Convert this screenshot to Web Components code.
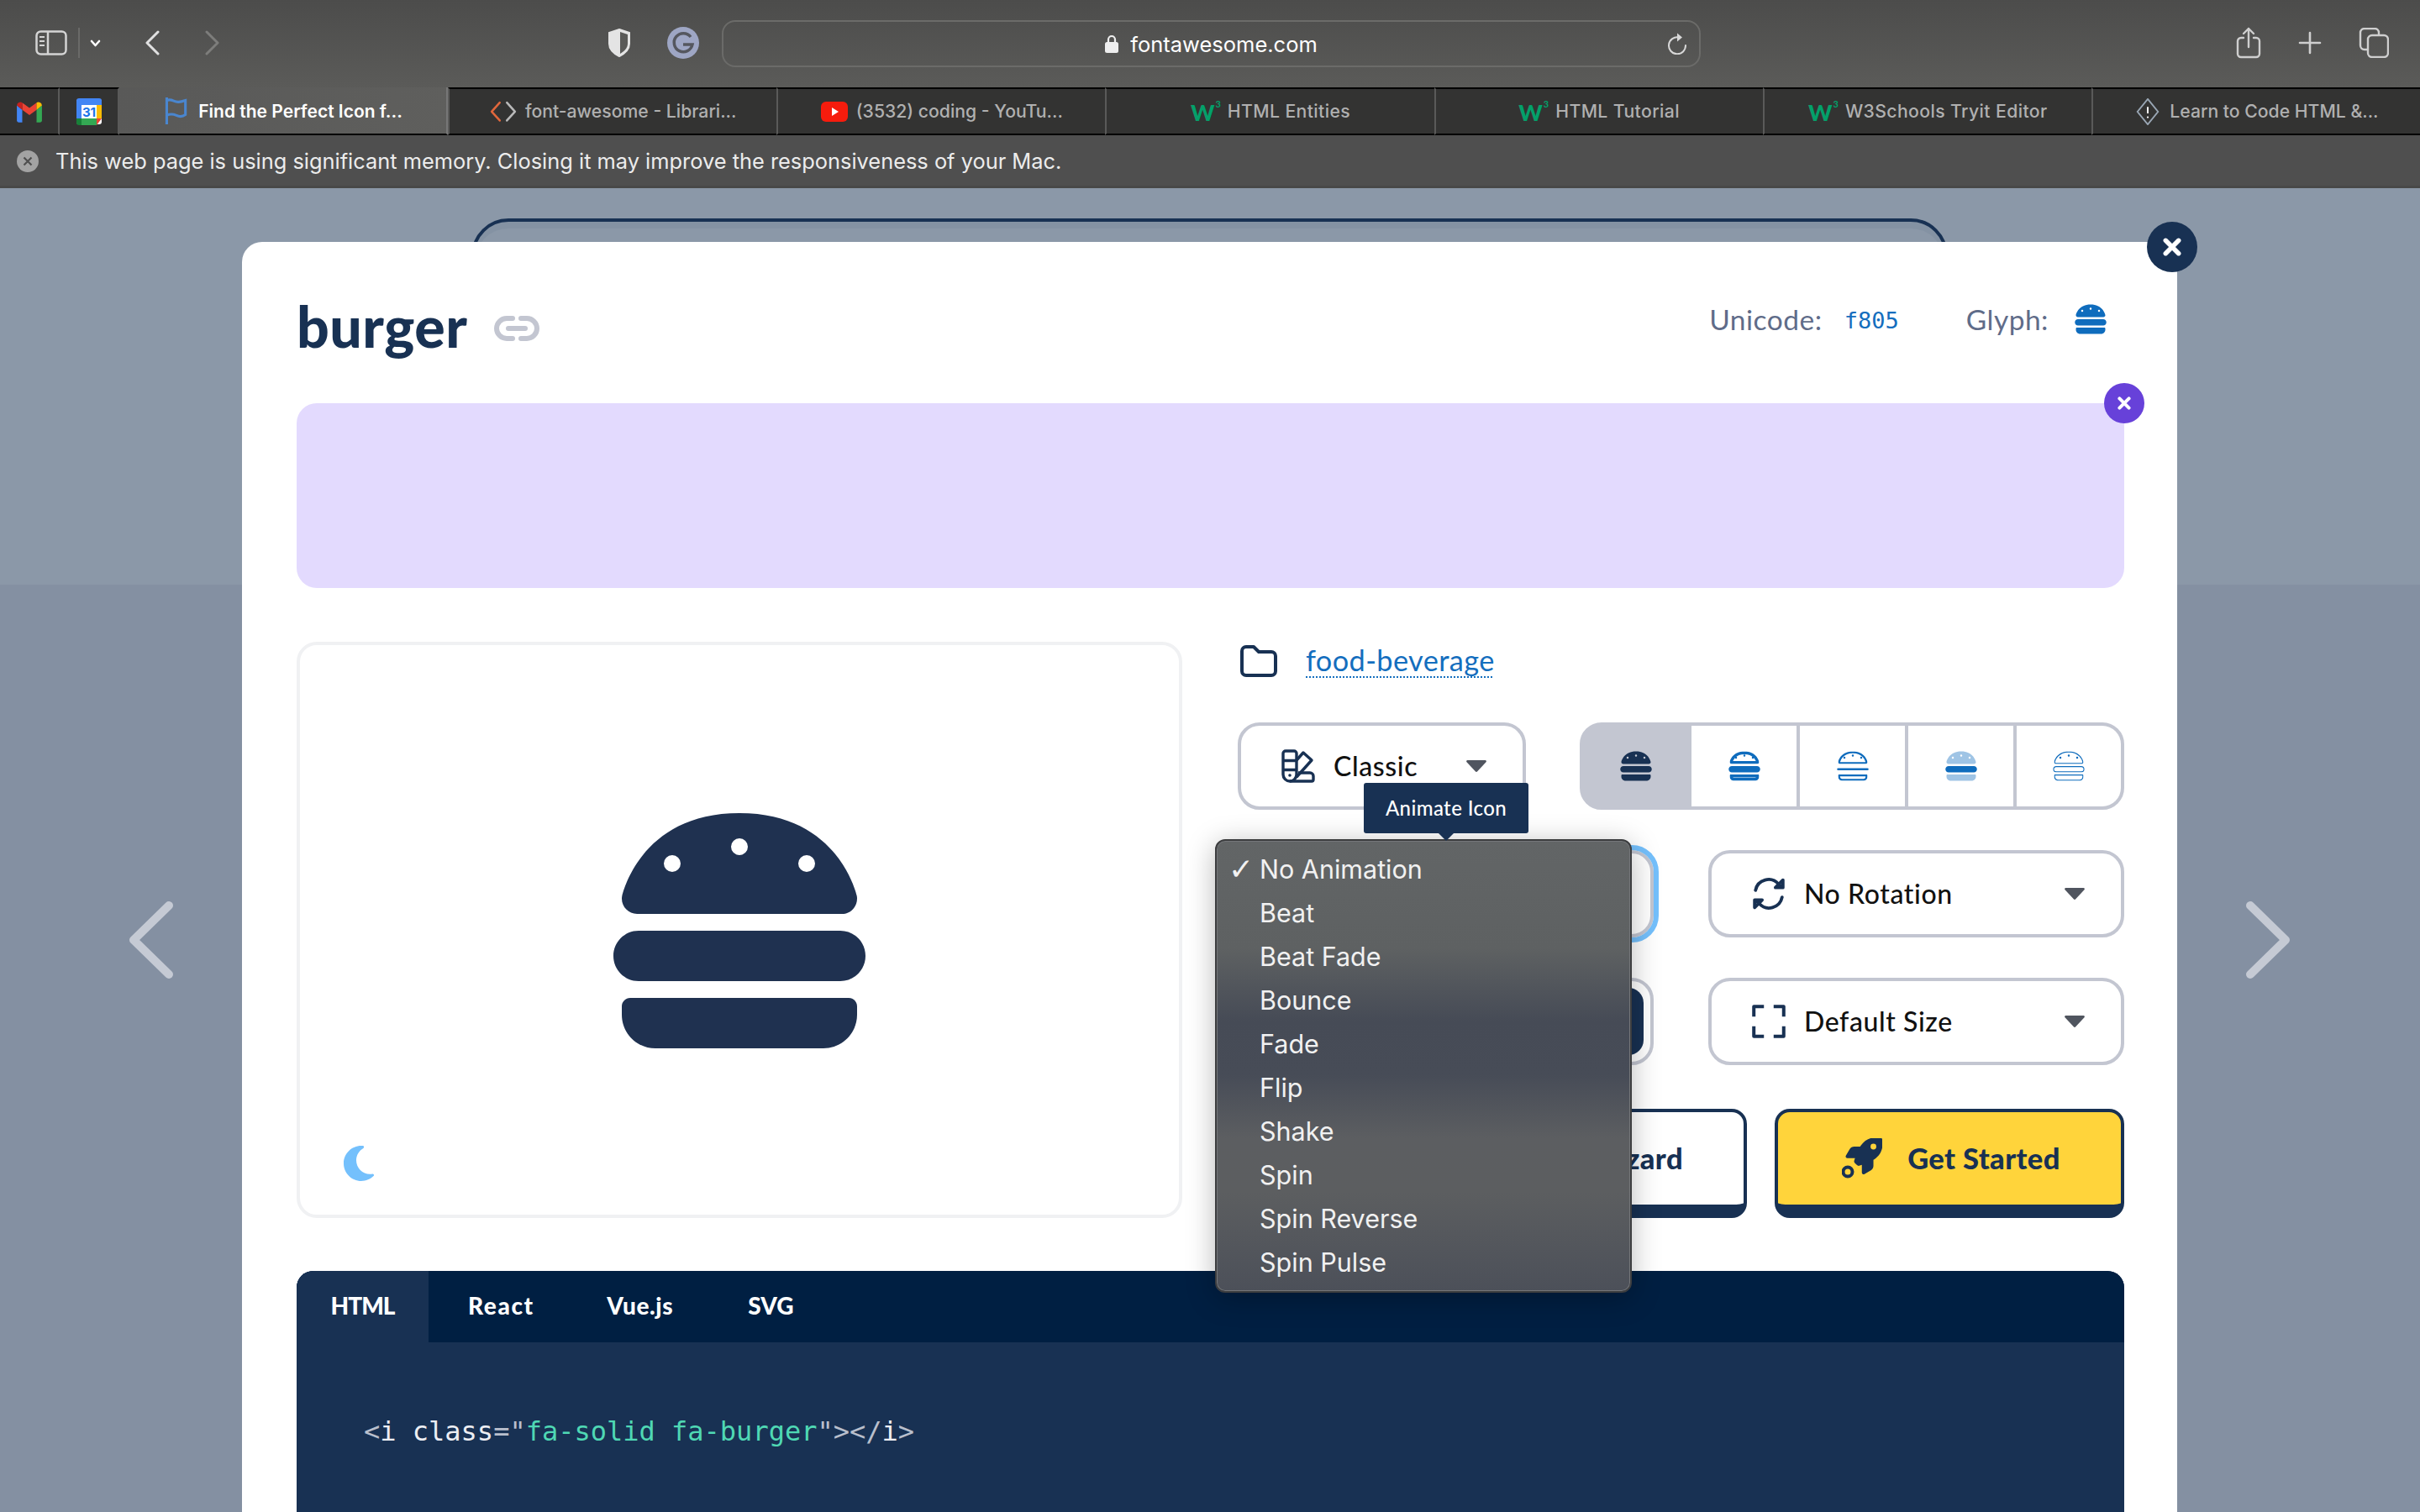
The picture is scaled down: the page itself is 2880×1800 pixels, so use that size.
<!DOCTYPE html>
<html lang="en">
<head>
<meta charset="utf-8">
<title>burger</title>
<style>
  html, body { margin: 0; padding: 0; background: #4f4f4f; }
  body { width: 2880px; height: 1800px; overflow: hidden; font-family: Lato, "Noto Sans", sans-serif; }
</style>
</head>
<body>
<browser-window>
  <browser-toolbar slot="chrome"></browser-toolbar>
  <tab-strip slot="chrome">
    <browser-tab pinned><tab-icon name="gmail"></tab-icon></browser-tab>
    <browser-tab pinned><tab-icon name="calendar"></tab-icon></browser-tab>
    <browser-tab active><tab-icon name="flag" slot="icon"></tab-icon>Find the Perfect Icon f...</browser-tab>
    <browser-tab><tab-icon name="code" slot="icon"></tab-icon>font-awesome - Librari...</browser-tab>
    <browser-tab><tab-icon name="youtube" slot="icon"></tab-icon>(3532) coding - YouTu...</browser-tab>
    <browser-tab style="letter-spacing:.4px"><w3-mark slot="icon"></w3-mark>HTML Entities</browser-tab>
    <browser-tab style="letter-spacing:.4px"><w3-mark slot="icon"></w3-mark>HTML Tutorial</browser-tab>
    <browser-tab style="letter-spacing:.4px"><w3-mark slot="icon"></w3-mark>W3Schools Tryit Editor</browser-tab>
    <browser-tab><tab-icon name="learn" slot="icon"></tab-icon>Learn to Code HTML &amp;...</browser-tab>
  </tab-strip>
  <memory-notice slot="chrome">This web page is using significant memory. Closing it may improve the responsiveness of your Mac.</memory-notice>
  <site-backdrop>
    <icon-modal></icon-modal>
  </site-backdrop>
</browser-window>

<script>
const BUN_TOP = 'M61.1 224C45 224 32 211 32 194.9c0-1.9 .2-3.7 .6-5.6C37.9 168.3 78.8 32 256 32s218.1 136.3 223.4 157.3c.5 1.9 .6 3.7 .6 5.6c0 16.1-13 29.1-29.1 29.1H61.1z';
const PATTY = 'M16 304c0-26.5 21.5-48 48-48H448c26.5 0 48 21.5 48 48s-21.5 48-48 48H64c-26.5 0-48-21.5-48-48z';
const BUN_BOTTOM = 'M32 400c0-8.8 7.2-16 16-16H464c8.8 0 16 7.2 16 16v16c0 35.3-28.7 64-64 64H96c-35.3 0-64-28.7-64-64V400z';
const SEEDS = 'M144 128a16 16 0 1 0 -32 0 16 16 0 1 0 32 0zM400 128a16 16 0 1 0 -32 0 16 16 0 1 0 32 0zM272 96a16 16 0 1 0 -32 0 16 16 0 1 0 32 0z';

// stroke drawn on the outline, clipped to the shape, so it stays inside
const inset = (id, d, w) => `<clipPath id="${id}"><path d="${d}"/></clipPath><path d="${d}" fill="none" stroke="currentColor" stroke-width="${w * 2}" clip-path="url(#${id})"/>`;

const ICONS = {
  'burger-solid': `<svg viewBox="0 0 512 512"><path fill="currentColor" fill-rule="evenodd" d="${BUN_TOP}${SEEDS}${PATTY}${BUN_BOTTOM}"/></svg>`,
  'burger-regular': `<svg viewBox="0 0 512 512" fill="currentColor">${inset('a', BUN_TOP, 44)}${inset('b', BUN_BOTTOM, 44)}<path d="${PATTY}"/><path d="${SEEDS}"/></svg>`,
  'burger-light': `<svg viewBox="0 0 512 512" fill="currentColor">${inset('a', BUN_TOP, 30)}${inset('b', BUN_BOTTOM, 30)}<rect x="16" y="288" width="480" height="32" rx="16"/><path d="${SEEDS}"/></svg>`,
  'burger-duotone': `<svg viewBox="0 0 512 512" fill="currentColor"><path opacity=".4" fill-rule="evenodd" d="${BUN_TOP}${SEEDS}${BUN_BOTTOM}"/><path d="${PATTY}"/></svg>`,
  'burger-thin': `<svg viewBox="0 0 512 512" fill="currentColor">${inset('a', BUN_TOP, 16)}${inset('b', BUN_BOTTOM, 16)}${inset('c', PATTY, 16)}<path d="${SEEDS}"/></svg>`,
  moon: `<svg viewBox="0 0 384 512"><path fill="currentColor" d="M223.5 32C100 32 0 132.3 0 256S100 480 223.5 480c60.6 0 115.5-24.2 155.8-63.4c5-4.9 6.3-12.5 3.1-18.7s-10.1-9.7-17-8.5c-9.8 1.7-19.8 2.6-30.1 2.6c-96.9 0-175.5-78.8-175.5-176c0-65.8 36-123.1 89.3-153.3c6.1-3.5 9.2-10.5 7.7-17.3s-7.3-11.9-14.3-12.5c-6.3-.5-12.6-.8-19-.8z"/></svg>`,
  link: `<svg viewBox="0 0 54 30" fill="none" stroke="currentColor" stroke-width="6" stroke-linecap="round"><path d="M22 3H15a12 12 0 0 0 0 24h7"/><path d="M32 3h7a12 12 0 0 1 0 24h-7"/><path d="M17 15H37"/></svg>`,
  folder: `<svg viewBox="0 0 44 38" fill="none" stroke="currentColor" stroke-width="4" stroke-linejoin="round"><path d="M2 7a5 5 0 0 1 5-5h9l6 6h15a5 5 0 0 1 5 5v18a5 5 0 0 1-5 5H7a5 5 0 0 1-5-5z"/></svg>`,
  swatchbook: `<svg viewBox="0 0 40 40" fill="none" stroke="currentColor" stroke-width="3.4" stroke-linejoin="round"><path d="M2 5a3 3 0 0 1 3-3h10a3 3 0 0 1 3 3v25a8 8 0 0 1-16 0z"/><path d="M2 13.500H18M2 24.500H18"/><circle cx="10" cy="31" r="1.800" fill="currentColor" stroke="none"/><path d="M18 13l8-9 10 9-18 20"/><path d="M20 28h14a4 4 0 0 1 4 4v4a2 2 0 0 1-2 2H10"/></svg>`,
  rotate: `<svg viewBox="0 0 38 36" fill="none" stroke="currentColor" stroke-width="3.600" stroke-linecap="round" stroke-linejoin="round"><path d="M4 14A15 15 0 0 1 30 7l3 3"/><path d="M34 22A15 15 0 0 1 8 29l-3-3"/><path d="M35 2.500V11H26.500z" /><path d="M3 33.500V25H11.500z"/></svg>`,
  expand: `<svg viewBox="0 0 36 36" fill="none" stroke="currentColor" stroke-width="3.600" stroke-linecap="square" stroke-linejoin="round"><path d="M2 11V2H11M25 2H34V11M34 25V34H25M11 34H2V25"/></svg>`,
  rocket: `<svg viewBox="0 0 48 48"><g transform="translate(4.500 -1) scale(.086)"><path fill="currentColor" d="M156.600 384.900L125.700 354c-8.500-8.500-11.500-20.800-7.700-32.200c3-8.900 7-20.500 11.800-33.800L24 288c-8.600 0-16.600-4.600-20.900-12.100s-4.200-16.700 .2-24.100l52.500-88.500c13-21.900 36.500-35.300 61.900-35.300l82.300 0c2.400-4 4.800-7.700 7.200-11.300C289.100-4.100 411.100-8.100 483.900 5.300c11.600 2.100 20.600 11.200 22.800 22.800c13.400 72.900 9.300 194.800-111.400 276.700c-3.500 2.400-7.300 4.800-11.300 7.200v82.300c0 25.400-13.400 49-35.300 61.900l-88.500 52.500c-7.400 4.400-16.600 4.500-24.100 .2s-12.100-12.200-12.100-20.900V380.800c-14.100 4.900-26.400 8.900-35.700 11.900c-11.200 3.600-23.400 .5-31.800-7.800zM384 168a40 40 0 1 0 0-80 40 40 0 1 0 0 80z"/></g><circle cx="7" cy="40" r="5.500" fill="none" stroke="currentColor" stroke-width="4"/></svg>`,
  caret: `<svg viewBox="0 0 24 14"><path fill="currentColor" d="M1.500 0h21a1.300 1.300 0 0 1 1 2.200L13 13.500a1.400 1.400 0 0 1-2 0L.5 2.200a1.300 1.300 0 0 1 1-2.200z"/></svg>`,
  xmark: `<svg viewBox="0 0 20 20" fill="none" stroke="currentColor" stroke-width="5" stroke-linecap="round"><path d="M3 3L17 17M17 3L3 17"/></svg>`,
  chevron: `<svg viewBox="0 0 54 92" fill="none" stroke="currentColor" stroke-width="10" stroke-linecap="round" stroke-linejoin="round"><path d="M49 5L7 46l42 41"/></svg>`
};

const TAB_ICONS = {
  gmail: `<svg viewBox="0 0 30 26"><path fill="#4285f4" d="M1 6v17a2 2 0 0 0 2 2h4V11z"/><path fill="#34a853" d="M29 6v17a2 2 0 0 1-2 2h-4V11z"/><path fill="#ea4335" d="M7 11L15 17l8-6V3l-8 6-8-6z"/><path fill="#c5221f" d="M1 6a4 4 0 0 1 6-3v8L1 6z"/><path fill="#fbbc04" d="M29 6a4 4 0 0 0-6-3v8l6-5z"/></svg>`,
  calendar: `<svg viewBox="0 0 32 32"><rect x="1" y="1" width="30" height="30" rx="3" fill="#fff"/><path fill="#4285f4" d="M4 0h24a3 3 0 0 1 3 3v5H1V3a3 3 0 0 1 3-3zM1 8h6v16H1z"/><path fill="#fbbc04" d="M25 8h6v16h-6z"/><path fill="#34a853" d="M7 24h18v8H7z"/><path fill="#188038" d="M1 24h6v8H4a3 3 0 0 1-3-3z"/><path fill="#ea4335" d="M25 24h6l-6 8z"/><text x="16" y="22" font-size="15" font-weight="700" text-anchor="middle" fill="#1a73e8" font-family="Inter, sans-serif">31</text></svg>`,
  flag: `<svg viewBox="0 0 30 36" fill="none" stroke="#4a86cf" stroke-width="3.500"><path d="M2 0V36"/><path d="M2 4c7-3 10 3 16 2 3 0 6-1 9-2v19c-4 3-8 3-12 1-5-2-9-2-13 0"/></svg>`,
  code: `<svg viewBox="0 0 30 24" fill="none" stroke-width="2.400" stroke-linecap="round" stroke-linejoin="round"><path stroke="#e0673c" d="M11 2L2 12l9 10"/><path stroke="#b9b9b9" d="M19 2l9 10-9 10"/></svg>`,
  youtube: `<svg viewBox="0 0 32 24"><rect width="32" height="24" rx="6" fill="#f61c0d"/><path fill="#fff" d="M13 7l8 5-8 5z"/></svg>`,
  learn: `<svg viewBox="0 0 30 34" fill="none" stroke="#9aa7b5" stroke-width="2"><path d="M15 1L28 17 15 33 2 17z"/><path stroke="#fff" d="M15 11V19"/><circle cx="15" cy="24" r="1.200" fill="#fff" stroke="none"/></svg>`
};

// base for the simple elements: a template string and an open root
class ShadowElement extends HTMLElement {
  constructor() {
    super();
    this.attachShadow({ mode: 'open' });
    this.shadowRoot.innerHTML = this.constructor.markup;
  }
}

class FaIcon extends HTMLElement {
  connectedCallback() {
    if (this.shadowRoot) return;
    this.attachShadow({ mode: 'open' });
    this.shadowRoot.innerHTML = `<style>:host{display:inline-flex;flex:none}svg{display:block;width:100%;height:100%}</style>${ICONS[this.getAttribute('name')]}`;
  }
}
customElements.define('fa-icon', FaIcon);

class TabIcon extends HTMLElement {
  connectedCallback() {
    if (this.shadowRoot) return;
    this.attachShadow({ mode: 'open' });
    this.shadowRoot.innerHTML = `<style>:host{display:inline-flex;flex:none;width:32px;height:32px;align-items:center;justify-content:center}svg{display:block;width:100%;max-height:100%}</style>${TAB_ICONS[this.getAttribute('name')]}`;
  }
}
customElements.define('tab-icon', TabIcon);

class W3Mark extends ShadowElement {
  static markup = `<style>
    :host { display: inline-flex; flex: none; color: #04a06a; font: 900 27px/1 Lato, sans-serif; letter-spacing: -2px; }
    sup { font-size: 11px; font-weight: 700; margin: -2px 0 0 3px; line-height: 1; }
  </style>W<sup>3</sup>`;
}
customElements.define('w3-mark', W3Mark);

class BrowserWindow extends ShadowElement {
  static markup = `<style>
    :host { display: flex; flex-direction: column; width: 2880px; height: 1800px; overflow: hidden; }
  </style><slot name="chrome"></slot><slot></slot>`;
}
customElements.define('browser-window', BrowserWindow);

class BrowserToolbar extends ShadowElement {
  static markup = `<style>
    :host { display: flex; flex: none; align-items: center; height: 102px; padding: 0 0 2px 42px; box-sizing: content-box; color: #d4d4d4;
      background: linear-gradient(#4c4c4b, #5b5b59); font-family: Inter, sans-serif; }
    svg { display: block; flex: none; }
    .sep { width: 2px; height: 36px; background: #6a6a68; margin-left: 13px; }
    .url { display: grid; grid-template-columns: 1fr auto 1fr; align-items: center; box-sizing: border-box; width: 1165px; height: 56px; margin-left: 27px; margin-top: 2px;
      border: 2px solid #6b6b69; border-radius: 16px; color: #fff; font-size: 25.5px; }
    .host { grid-column: 2; display: flex; align-items: center; gap: 14px; }
    .reload { justify-self: end; margin-right: 14px; }
  </style>
  <svg width="38" height="30" viewBox="0 0 38 30" fill="none" stroke="currentColor" stroke-width="2.500"><rect x="1.500" y="1.500" width="35" height="27" rx="5"/><path d="M15 2V28"/><path d="M5 8h6M5 13h6M5 18h6" stroke-width="2"/></svg>
  <span class="sep"></span>
  <svg style="margin-left:12px" width="13" height="9" viewBox="0 0 13 9" fill="none" stroke="#fff" stroke-width="2.600" stroke-linecap="round" stroke-linejoin="round"><path d="M2 2l4.500 5L11 2"/></svg>
  <svg style="margin-left:52px" width="18" height="30" viewBox="0 0 18 30" fill="none" stroke="#e0e0e0" stroke-width="3" stroke-linecap="round" stroke-linejoin="round"><path d="M16 2L3 15l13 13"/></svg>
  <svg style="margin-left:54px" width="18" height="30" viewBox="0 0 18 30" fill="none" stroke="#7d7d7b" stroke-width="3" stroke-linecap="round" stroke-linejoin="round"><path d="M2 2l13 13L2 28"/></svg>
  <svg style="margin-left:461px" width="28" height="34" viewBox="0 0 28 34"><path fill="#e4e4e4" stroke="#e4e4e4" stroke-width="2" d="M14 1l12 4v13c0 7-6 12-12 15C8 30 2 25 2 18V5z"/><path fill="#5a5a58" d="M15 4l9 3v11c0 5-4 9-9 12z"/></svg>
  <svg style="margin-left:43px" width="38" height="38" viewBox="0 0 38 38"><circle cx="19" cy="19" r="19" fill="#9ea6c4"/><path fill="none" stroke="#55575f" stroke-width="3.500" d="M28 12a11 11 0 1 0 2 9H19"/></svg>
  <div class="url">
    <div class="host">
      <svg width="16" height="22" viewBox="0 0 16 22"><path fill="none" stroke="#eee" stroke-width="2.200" d="M4 10V6a4 4 0 0 1 8 0v4"/><rect y="9" width="16" height="13" rx="2.500" fill="#eee"/></svg>
      <span>fontawesome.com</span>
    </div>
    <svg class="reload" width="24" height="26" viewBox="0 0 24 26" fill="none" stroke="#d8d8d8" stroke-width="2" stroke-linecap="round"><path d="M14 5.500A10 10 0 1 0 22 15"/><path fill="#d8d8d8" stroke="none" d="M12 .5l6 5-6 5z"/></svg>
  </div>
  <svg style="margin-left:637px" width="30" height="38" viewBox="0 0 30 38" fill="none" stroke="#cfcfcf" stroke-width="2.400" stroke-linecap="round" stroke-linejoin="round"><path d="M9 13H6a4 4 0 0 0-4 4v15a4 4 0 0 0 4 4h18a4 4 0 0 0 4-4V17a4 4 0 0 0-4-4h-3"/><path d="M15 24V2M9 8l6-6 6 6"/></svg>
  <svg style="margin-left:44px" width="28" height="28" viewBox="0 0 28 28" stroke="#cfcfcf" stroke-width="2.600" stroke-linecap="round"><path d="M14 2V26M2 14H26"/></svg>
  <svg style="margin-left:44px" width="36" height="36" viewBox="0 0 36 36" fill="none" stroke="#cfcfcf" stroke-width="2.400"><rect x="11" y="9" width="24" height="26" rx="5"/><path d="M11 26H7a5 5 0 0 1-5-5V6a5 5 0 0 1 5-5h12a5 5 0 0 1 5 5v3"/></svg>`;
}
customElements.define('browser-toolbar', BrowserToolbar);

class TabStrip extends ShadowElement {
  static markup = `<style>
    :host { display: flex; flex: none; height: 57px; box-sizing: border-box; background: #333332; }
  </style><slot></slot>`;
}
customElements.define('tab-strip', TabStrip);

class BrowserTab extends ShadowElement {
  static markup = `<style>
    :host { display: flex; flex: 1 1 0; min-width: 0; box-sizing: border-box; align-items: center; justify-content: center; gap: 10px; padding-top: 1px;
      border-top: 2px solid #000; border-bottom: 2px solid #000; border-left: 2px solid #5a5a59;
      color: #b0b0b0; font: 500 21.2px/1 Inter, sans-serif; white-space: nowrap; }
    :host([pinned]) { flex: none; width: 71px; border-left: 0; border-right: 2px solid #5a5a59; }
    :host([active]) { background: linear-gradient(100deg, #595958, #5f5f5d); color: #fff; font-weight: 600; font-size: 21px; border-top: 0; border-left: 0; border-right: 2px solid #777; }
  </style><slot name="icon"></slot><slot></slot>`;
}
customElements.define('browser-tab', BrowserTab);

class MemoryNotice extends ShadowElement {
  static markup = `<style>
    :host { display: flex; flex: none; align-items: center; gap: 20px; height: 63px; box-sizing: border-box; padding: 2px 0 0 20px; background: #4f4f4f;
      border-bottom: 3px solid #484848; color: #ececec; font: 400 25.4px/1 Inter, sans-serif; white-space: nowrap; }
    svg { flex: none; display: block; }
  </style>
  <svg width="26" height="26" viewBox="0 0 26 26"><circle cx="13" cy="13" r="13" fill="#a3a3a3"/><path d="M8.500 8.500l9 9M17.500 8.500l-9 9" stroke="#4f4f4f" stroke-width="2.200"/></svg>
  <span><slot></slot></span>`;
}
customElements.define('memory-notice', MemoryNotice);

class SiteBackdrop extends ShadowElement {
  static markup = `<style>
    :host { display: flex; flex: 1 1 0; min-height: 0; position: relative; padding: 64px 289px 0 288px; box-sizing: border-box;
      background: linear-gradient(#8b98a8 0 472px, #8490a2 472px); }
    .search { position: absolute; left: 561px; top: 36px; width: 1757px; height: 200px; box-sizing: border-box;
      border: 4px solid #183153; border-radius: 44px; box-shadow: inset 0 8px 0 #8492a3; }
    .nav { position: absolute; top: 849px; width: 54px; height: 92px; color: #c5cad4; }
    .prev { left: 152px; }
    .next { left: 2673px; transform: scaleX(-1); }
    ::slotted(*) { position: relative; }
  </style>
  <div class="search"></div>
  <fa-icon class="nav prev" name="chevron"></fa-icon>
  <fa-icon class="nav next" name="chevron"></fa-icon>
  <slot></slot>`;
}
customElements.define('site-backdrop', SiteBackdrop);

class SelectBox extends ShadowElement {
  static markup = `<style>
    :host { display: flex; align-items: center; box-sizing: border-box; height: 104px; padding: 0 43px 0 48px; background: #fff; color: #111;
      border: 4px solid #c3c6d1; border-radius: 26px; font: 500 32px/1 Lato, sans-serif; letter-spacing: .6px; }
    :host([focused]) { outline: 6px solid #74c0fc; outline-offset: 0; }
    span { flex: 1; padding-left: 22px; white-space: nowrap; }
    ::slotted(fa-icon) { color: #183153; }
    fa-icon { width: 24px; height: 14px; color: #50555f; }
  </style><slot name="icon"></slot><span><slot></slot></span><fa-icon name="caret"></fa-icon>`;
}
customElements.define('select-box', SelectBox);

class StyleSwitch extends ShadowElement {
  static markup = `<style>
    :host { display: grid; grid-template-columns: 125px 129px 129px 129px 1fr; box-sizing: border-box; height: 104px; overflow: hidden;
      background: #c3c6d1; border: 4px solid #c3c6d1; border-radius: 26px; }
    div { display: flex; align-items: center; justify-content: center; background: #fff; color: #0f6cbd; margin-left: 4px; }
    div:first-of-type { background: transparent; color: #183153; margin-left: 0; }
    div:nth-of-type(2) { margin-left: 0; padding-left: 4px; background: linear-gradient(90deg, #c3c6d1 4px, #fff 4px); }
    fa-icon { width: 40px; height: 40px; }
  </style>
  <div><fa-icon name="burger-solid"></fa-icon></div>
  <div><fa-icon name="burger-regular"></fa-icon></div>
  <div><fa-icon name="burger-light"></fa-icon></div>
  <div><fa-icon name="burger-duotone"></fa-icon></div>
  <div><fa-icon name="burger-thin"></fa-icon></div>`;
}
customElements.define('style-switch', StyleSwitch);

class ActionButton extends ShadowElement {
  static markup = `<style>
    :host { display: flex; align-items: center; justify-content: center; gap: 30px; box-sizing: border-box; height: 130px; padding-left: 4px;
      background: #fff; color: #183153; border: 4px solid #183153; border-bottom-width: 16px; border-radius: 18px; font: 900 34.5px/1 Lato, sans-serif; letter-spacing: .4px; white-space: nowrap; }
    :host([primary]) { background: #ffd43b; }
  </style><slot name="icon"></slot><slot></slot>`;
}
customElements.define('action-button', ActionButton);

class NativeMenu extends ShadowElement {
  static markup = `<style>
    :host { display: block; box-sizing: border-box; width: 496px; height: 540px; padding: 8px 0; border-radius: 12px; border: 2px solid #3c3d3f;
      box-shadow: inset 0 0 0 1px #75777a, 0 6px 34px rgba(0, 0, 0, .28);
      background: linear-gradient(#626566 0, #5e6162 24%, #464b56 40%, #474c57 52%, #5c5e61 66%, #5c5e60 78%, #4c5059 100%);
      color: #f1f1f1; font: 400 30.5px/52px Inter, sans-serif; }
    ::slotted(div) { display: block; height: 52px; padding-left: 51px; position: relative; white-space: nowrap; }
  </style><slot></slot>`;
}
customElements.define('native-menu', NativeMenu);

class CodePanel extends ShadowElement {
  static markup = `<style>
    :host { display: block; height: 500px; background: #183153; border-radius: 20px 20px 0 0; overflow: hidden; }
    nav { display: flex; height: 85px; background: #001f42; color: #fff; font: 900 28px/82px Lato, sans-serif; }
    nav span { padding: 0 44.5px; }
    nav span.on { box-sizing: border-box; width: 157px; padding: 0; text-align: center; background: #183153; letter-spacing: -1px; }
    nav span.react { padding: 0 42px 0 47px; letter-spacing: 1.6px; }
    nav span.vue { letter-spacing: .6px; }
    pre { margin: 0; padding: 84px 0 0 80px; font: 400 32px/44px "DejaVu Sans Mono", monospace; color: #eceef3; }
    .t { color: #b9bfcc; }
    .s { color: #4fd8b4; }
  </style>
  <nav><span class="on">HTML</span><span class="react">React</span><span class="vue">Vue.js</span><span>SVG</span></nav>
  <pre><span class="t">&lt;</span>i class<span class="t">="</span><span class="s">fa-solid fa-burger</span><span class="t">"&gt;&lt;/</span>i<span class="t">&gt;</span></pre>`;
}
customElements.define('code-panel', CodePanel);

class IconModal extends ShadowElement {
  static markup = `<style>
    :host { display: block; flex: 1; box-sizing: border-box; height: 1600px; padding: 0 63px 0 65px; background: #fff; border-radius: 24px; color: #183153; font-family: Lato, sans-serif; }
    .close { position: absolute; display: flex; align-items: center; justify-content: center; border-radius: 50%; color: #fff; }
    .close.modal { right: -24px; top: -24px; width: 60px; height: 60px; background: #183153; }
    .close.modal fa-icon { width: 22px; height: 22px; }
    header { display: flex; align-items: center; height: 192px; box-sizing: border-box; padding-top: 8px; }
    h1 { margin: 0; font: 900 68px/1 Lato, sans-serif; letter-spacing: .5px; }
    .link { width: 54px; height: 30px; margin: 6px 0 0 32px; color: #c3c6d1; }
    .meta { margin-left: auto; display: flex; align-items: center; color: #5f6c89; font-size: 33.5px; letter-spacing: .5px; padding-bottom: 16px; }
    .meta code { font: 400 27px/1 "DejaVu Sans Mono", monospace; color: #146ebe; margin: 2px 80px 0 26px; letter-spacing: 0; }
    .meta fa-icon { width: 40px; height: 40px; margin: 0 20px 0 30px; color: #0f6cbd; }
    .banner { position: relative; height: 220px; background: #e3dafe; border-radius: 24px; }
    .close.ad { right: -24px; top: -24px; width: 48px; height: 48px; background: #6741d9; }
    .close.ad fa-icon { width: 16px; height: 16px; }
    main { display: grid; grid-template-columns: 1054px 1fr; column-gap: 66px; margin-top: 64px; }
    .preview { position: relative; display: flex; align-items: center; justify-content: center; height: 686px; box-sizing: border-box; border: 4px solid #f0f1f3; border-radius: 24px; }
    .preview .big { width: 320px; height: 320px; color: #1f3150; margin: 2px 0 0 0; }
    .moon { position: absolute; left: 52px; bottom: 37px; width: 36px; height: 48px; color: #74c0fc; }
    .side { position: relative; }
    .category { display: flex; align-items: center; gap: 34px; height: 46px; margin-bottom: 50px; padding: 0 0 3px 3px; box-sizing: content-box; font-size: 34.3px; }
    .category { height: 43px; }
    .category fa-icon { width: 44px; height: 38px; color: #183153; margin-top: 3px; }
    .category a { color: #146ebe; text-decoration: underline dotted 2px; text-underline-offset: 6px; letter-spacing: .4px; }
    .row { display: grid; margin-bottom: 48px; }
    .r1 { grid-template-columns: 343px 1fr; column-gap: 64px; }
    .r2 { grid-template-columns: 495px 495px; column-gap: 65px; }
    .r3 { grid-template-columns: 495px 495px; column-gap: 65px; margin-bottom: 52px; }
    .r4 { grid-template-columns: 606px 1fr; column-gap: 33px; margin-bottom: 0; }
    select-box fa-icon { width: 40px; height: 40px; }
    .color { display: block; box-sizing: border-box; height: 104px; padding: 8px; border: 4px solid #c3c6d1; border-radius: 26px; }
    .color div { height: 80px; background: #183153; border-radius: 18px; }
    .wizard { justify-content: flex-end; padding-right: 72px; }
    .r4 fa-icon { width: 48px; height: 48px; }
    code-panel { margin-top: 63px; }
    .tip { position: absolute; left: 150px; top: 168px; width: 196px; height: 60px; display: flex; align-items: center; justify-content: center;
      background: #183153; color: #fff; font: 500 24px/1 Lato, sans-serif; letter-spacing: .4px; border-radius: 3px; z-index: 3; }
    .tip::after { content: ""; position: absolute; left: 88px; bottom: -9px; border: 10px solid transparent; border-bottom: 0; border-top-color: #183153; }
    native-menu { position: absolute; left: -27px; top: 235px; z-index: 2; }
    .check { position: absolute; left: 14px; top: 0; font-family: "DejaVu Sans", sans-serif; font-size: 36px; }
  </style>
  <span class="close modal"><fa-icon name="xmark"></fa-icon></span>
  <header>
    <h1>burger</h1>
    <fa-icon class="link" name="link"></fa-icon>
    <div class="meta">Unicode:<code>f805</code>Glyph:<fa-icon name="burger-solid"></fa-icon></div>
  </header>
  <div class="banner"><span class="close ad"><fa-icon name="xmark"></fa-icon></span></div>
  <main>
    <div class="preview">
      <fa-icon class="big" name="burger-solid"></fa-icon>
      <fa-icon class="moon" name="moon"></fa-icon>
    </div>
    <div class="side">
      <div class="category"><fa-icon name="folder"></fa-icon><a>food-beverage</a></div>
      <div class="row r1">
        <select-box><fa-icon slot="icon" name="swatchbook"></fa-icon>Classic</select-box>
        <style-switch></style-switch>
      </div>
      <div class="row r2">
        <select-box focused></select-box>
        <select-box><fa-icon slot="icon" name="rotate"></fa-icon>No Rotation</select-box>
      </div>
      <div class="row r3">
        <div class="color"><div></div></div>
        <select-box><fa-icon slot="icon" name="expand"></fa-icon>Default Size</select-box>
      </div>
      <div class="row r4">
        <action-button class="wizard">Icon Wizard</action-button>
        <action-button primary><fa-icon slot="icon" name="rocket"></fa-icon>Get Started</action-button>
      </div>
      <div class="tip">Animate Icon</div>
      <native-menu>
        <div><span class="check">✓</span>No Animation</div>
        <div>Beat</div>
        <div>Beat Fade</div>
        <div>Bounce</div>
        <div>Fade</div>
        <div>Flip</div>
        <div>Shake</div>
        <div>Spin</div>
        <div>Spin Reverse</div>
        <div>Spin Pulse</div>
      </native-menu>
    </div>
  </main>
  <code-panel></code-panel>`;
}
customElements.define('icon-modal', IconModal);
</script>
</body>
</html>
